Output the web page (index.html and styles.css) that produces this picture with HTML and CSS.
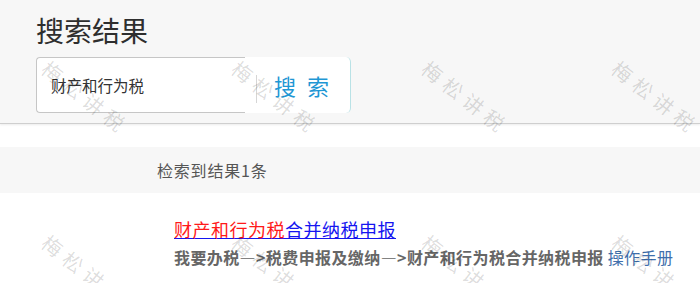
FILE: index.html
```html
<!DOCTYPE html>
<html lang="zh-CN">
<head>
<meta charset="utf-8">
<title>搜索结果</title>
<link rel="stylesheet" href="styles.css">
</head>
<body>
<div class="page">
  <header class="header">
    <h1 class="title">搜索结果</h1>
    <div class="search">
      <div class="search-input">财产和行为税</div>
      <div class="search-btn">搜 索</div>
    </div>
  </header>
  <div class="gap"></div>
  <div class="count">检索到结果1条</div>
  <div class="result">
    <a class="result-title" href="#"><span class="hl">财产和行为税</span>合并纳税申报</a>
    <div class="result-path">我要办税—&gt;税费申报及缴纳—&gt;财产和行为税合并纳税申报 <span class="manual">操作手册</span></div>
  </div>
  <div class="wm-layer">
    <div class="wm"><span>梅松讲税</span></div>
    <div class="wm"><span>梅松讲税</span></div>
    <div class="wm"><span>梅松讲税</span></div>
    <div class="wm"><span>梅松讲税</span></div>
    <div class="wm"><span>梅松讲税</span></div>
    <div class="wm"><span>梅松讲税</span></div>
    <div class="wm"><span>梅松讲税</span></div>
    <div class="wm"><span>梅松讲税</span></div>
  </div>
</div>
</body>
</html>
```
FILE: styles.css
```css
* { box-sizing: border-box; }
html, body { margin: 0; padding: 0; }
body {
  font-family: "Noto Sans CJK SC", "Noto Sans", "Liberation Sans", sans-serif;
  background: #ffffff;
  width: 700px;
  height: 283px;
  overflow: hidden;
}
.page { position: relative; width: 700px; height: 283px; overflow: hidden; }
.header {
  background: #f7f7f7;
  height: 124px;
  padding: 12px 0 0 36px;
  border-bottom: 1px solid #cfcfcf;
  box-shadow: 0 1px 2px rgba(0,0,0,0.08);
}
.title {
  margin: 0;
  font-size: 28px;
  line-height: 36px;
  font-weight: normal;
  color: #2e2e2e;
}
.search {
  display: flex;
  margin-top: 9px;
  height: 56px;
}
.search-input {
  width: 209px;
  height: 56px;
  background: #fff;
  border: 1px solid #c6c6c6;
  border-right: none;
  border-radius: 4px 0 0 4px;
  padding-left: 14px;
  font-size: 15.5px;
  line-height: 54px;
  color: #333;
}
.search-btn {
  position: relative;
  width: 106px;
  height: 56px;
  background: #fff;
  border-right: 1px solid #b9e2e6;
  border-radius: 0 5px 5px 0;
  padding-left: 29px;
  font-size: 22px;
  line-height: 56px;
  letter-spacing: 3px;
  color: #1f97d4;
}
.search-btn::before {
  content: "";
  position: absolute;
  left: 11px;
  top: 18px;
  height: 28px;
  border-left: 1px solid #d6d6d6;
}
.gap { height: 23px; }
.count {
  height: 46px;
  background: #f7f7f7;
  padding-left: 157px;
  font-size: 16px;
  line-height: 46px;
  letter-spacing: 0.8px;
  color: #555;
}
.result {
  padding: 24px 0 0 174px;
}
.result-title {
  display: block;
  font-size: 18px;
  line-height: 24px;
  letter-spacing: 0.5px;
  color: #1515f0;
  text-decoration: underline;
}
.result-title .hl { color: #ff1a1a; }
.result-path {
  margin-top: 5px;
  font-size: 16px;
  line-height: 22px;
  letter-spacing: 0.4px;
  font-weight: bold;
  color: #666;
  white-space: nowrap;
}
.result-path .manual {
  font-weight: normal;
  color: #3f6fac;
}
.wm-layer {
  position: absolute;
  left: 54px;
  top: 54px;
  display: grid;
  grid-template-columns: repeat(4, 190px);
  grid-template-rows: repeat(2, 174px);
  pointer-events: none;
}
.wm span {
  display: block;
  width: 120px;
  transform: rotate(38deg);
  transform-origin: 0 0;
  font-size: 20px;
  letter-spacing: 6px;
  color: rgba(0,0,0,0.14);
  white-space: nowrap;
}
```
